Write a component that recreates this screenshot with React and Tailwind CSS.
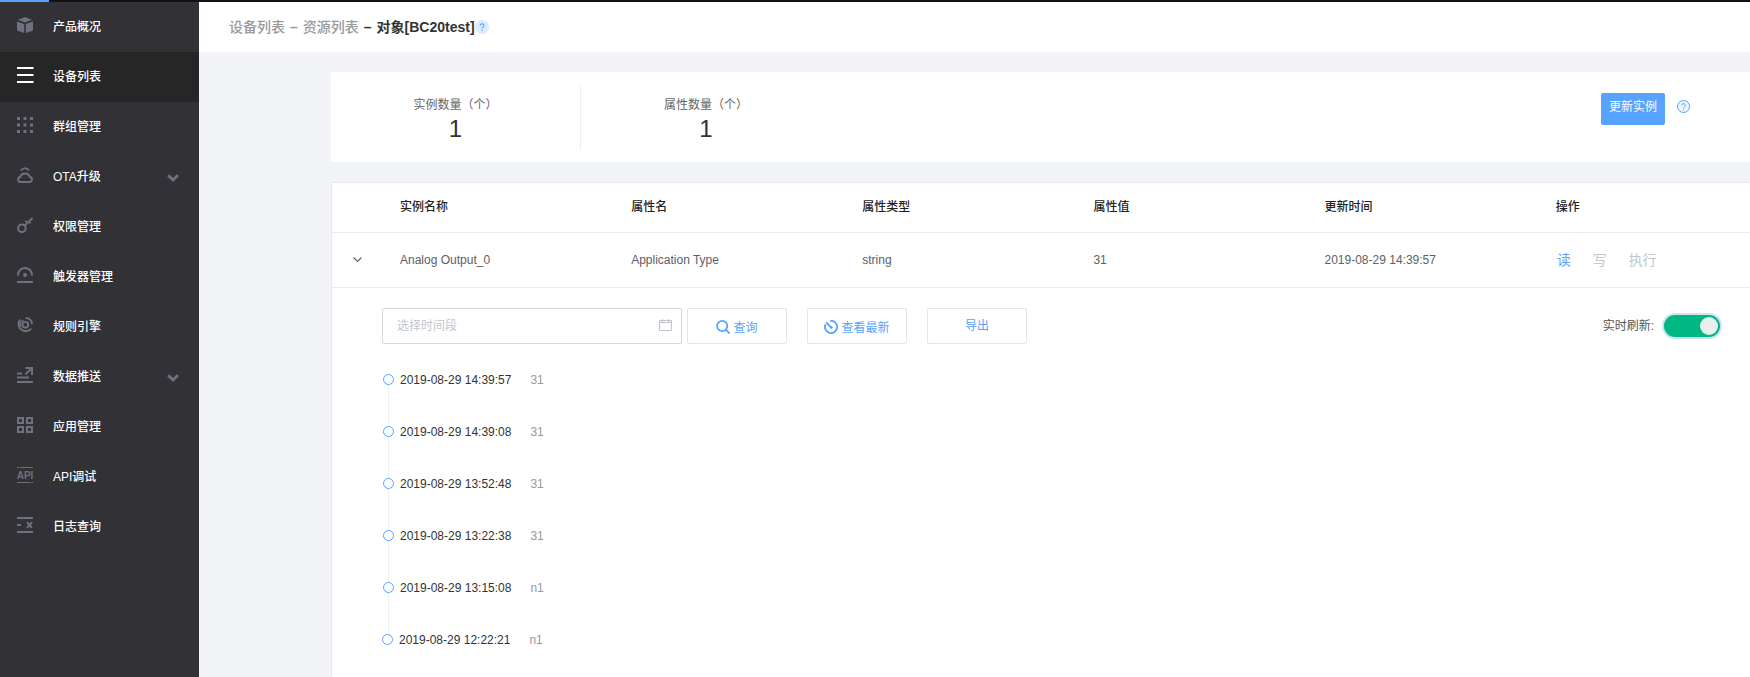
import React, { useState } from 'react';

const menu = [
  { name: '产品概况', icon: 'cube' },
  { name: '设备列表', icon: 'list', active: true },
  { name: '群组管理', icon: 'dots' },
  { name: 'OTA升级', icon: 'cloud', children: true },
  { name: '权限管理', icon: 'key' },
  { name: '触发器管理', icon: 'trigger' },
  { name: '规则引擎', icon: 'engine' },
  { name: '数据推送', icon: 'push', children: true },
  { name: '应用管理', icon: 'apps' },
  { name: 'API调试', icon: 'api' },
  { name: '日志查询', icon: 'log' },
];

const stats = [
  { label: '实例数量（个）', value: 1 },
  { label: '属性数量（个）', value: 1 },
];

const columns = ['实例名称', '属性名', '属性类型', '属性值', '更新时间'];

const row = ['Analog Output_0', 'Application Type', 'string', '31', '2019-08-29 14:39:57'];

const history = [
  { time: '2019-08-29 14:39:57', value: '31' },
  { time: '2019-08-29 14:39:08', value: '31' },
  { time: '2019-08-29 13:52:48', value: '31' },
  { time: '2019-08-29 13:22:38', value: '31' },
  { time: '2019-08-29 13:15:08', value: 'n1' },
  { time: '2019-08-29 12:22:21', value: 'n1' },
];

const icons = {
  cube: (
    <g fill="currentColor">
      <path d="M8 0 15 2.7 8 5.4 1 2.7z" />
      <path d="M0 4.4 7.2 7v9L1.2 14Q0 13.6 0 12.4z" />
      <path d="M16 4.4 8.8 7v9l6-2Q16 13.6 16 12.4z" />
    </g>
  ),
  list: <path d="M0 1h16.5M0 8h16.5M0 15h16.5" stroke="currentColor" strokeWidth="2" />,
  dots: (
    <g fill="currentColor">
      {[0, 6.5, 13].map((y) =>
        [0, 6.5, 13].map((x) => <rect key={`${x}-${y}`} x={x} y={y} width="3" height="3" />)
      )}
    </g>
  ),
  cloud: (
    <g fill="none" stroke="currentColor" strokeWidth="1.9">
      <path d="M4 15h8.2a2.5 2.5 0 0 0 .5-5 4.9 4.9 0 0 0-9.4 0A2.5 2.5 0 0 0 4 15z" />
      <path d="M4 3.4Q8-1.2 12 3.4" />
    </g>
  ),
  key: (
    <g fill="none" stroke="currentColor" strokeWidth="2">
      <circle cx="4.9" cy="11.3" r="3.8" />
      <path d="M7.6 8.6 15.6 1" />
      <path d="m8.2 3.8 2.4 2M11.8 4.6l2 1.8" strokeWidth="1.8" />
    </g>
  ),
  trigger: (
    <g fill="none" stroke="currentColor" strokeWidth="2">
      <path d="M1 8.6V8a7 7 0 0 1 14 0v.6M0 15h16" />
      <circle cx="8" cy="8" r="2" fill="currentColor" stroke="none" />
    </g>
  ),
  engine: (
    <g fill="none" stroke="currentColor" strokeWidth="1.9">
      <circle cx="8.3" cy="7.8" r="2.9" />
      <path d="M3.2 2.6A7.1 7.1 0 1 0 14.2 11.6" />
      <path d="M8.6.9A7.2 7.2 0 0 1 15.2 7" />
      <path d="M3.6 9.4A5 5 0 0 1 6.6 3" strokeWidth="1.2" />
    </g>
  ),
  push: (
    <g fill="none" stroke="currentColor" strokeWidth="2">
      <path d="M0 6.6h5M0 10.6h12M0 15h16" />
      <path d="M8.4 7.4 14.8 1.2M8.4 1H15v7" />
    </g>
  ),
  apps: (
    <g fill="none" stroke="currentColor" strokeWidth="2">
      <path d="M1 1h5v5H1zM10 1h5v5h-5zM1 10h5v5H1zM10 10h5v5h-5z" />
    </g>
  ),
  api: (
    <g>
      <path d="M0 .5h2M3 .5h13M0 15.5h13M14 15.5h2" stroke="currentColor" />
      <text x="8" y="12" textAnchor="middle" fontSize="10" fontWeight="700" fill="currentColor">
        API
      </text>
    </g>
  ),
  log: (
    <g fill="none" stroke="currentColor" strokeWidth="2">
      <path d="M0 1h16M0 8h4M0 15h16" />
      <path d="m10 5.2 5 5.6M15 5.2l-5 5.6" />
    </g>
  ),
};

const MenuIcon = ({ name }) => (
  <svg viewBox="0 0 16 16" className="mb-1 size-4 overflow-visible" aria-hidden="true">
    {icons[name]}
  </svg>
);

const QuestionMark = () => (
  <path
    d="M4.7 5.4a1.8 1.8 0 1 1 2.6 1.6q-.8.4-.8 1.2M6.5 9v1.1"
    fill="none"
    stroke="currentColor"
  />
);

const Sidebar = () => (
  <nav className="w-[199px] shrink-0 bg-[#323136]">
    {menu.map((item) => (
      <a
        key={item.name}
        href="#"
        className={
          item.active
            ? 'flex h-[50px] items-center bg-[#262626] pl-[17px] pr-5 text-white'
            : 'flex h-[50px] items-center pl-[17px] pr-5 text-[#6c727f]'
        }
      >
        <MenuIcon name={item.icon} />
        <span className="ml-5 flex-1 font-medium text-white">{item.name}</span>
        {item.children && (
          <svg viewBox="0 0 12 8" className="mt-0.5 h-2 w-3" aria-hidden="true">
            <path d="m1.2 1.2 4.8 4.8 4.8-4.8" fill="none" stroke="currentColor" strokeWidth="2.8" />
          </svg>
        )}
      </a>
    ))}
  </nav>
);

const Header = () => (
  <header className="flex h-[50px] shrink-0 items-center bg-white pl-[30px] text-sm font-medium text-[#999]">
    <a href="#">设备列表</a>
    <span className="mx-[5px] font-bold">–</span>
    <a href="#">资源列表</a>
    <span className="mx-[5px] font-bold text-[#333]">–</span>
    <h1 className="font-bold text-[#333]">对象[BC20test]</h1>
    <button type="button" aria-label="帮助" className="text-[#57a3ff]">
      <svg viewBox="0 0 13 13" className="size-[14px]">
        <circle cx="6.5" cy="6.5" r="6.5" fill="#dcebff" />
        <QuestionMark />
      </svg>
    </button>
  </header>
);

const Stats = () => (
  <section className="flex h-[90px] shrink-0 items-start bg-white">
    {stats.map((stat, i) => (
      <dl
        key={stat.label}
        className={
          i === 0
            ? 'mt-[13px] h-16 w-[250px] border-r border-[#eee] pt-[10px] text-center'
            : 'mt-[13px] h-16 w-[250px] pt-[10px] text-center'
        }
      >
        <dt className="leading-5 text-[#666]">{stat.label}</dt>
        <dd className="text-2xl leading-7 text-[#333]">{stat.value}</dd>
      </dl>
    ))}
    <div className="ml-auto mr-[60px] mt-[21px] flex">
      <button type="button" className="flex h-8 w-16 justify-center rounded-xs bg-[#57a3ff] pt-1 leading-5 text-white">
        更新实例
      </button>
      <button type="button" aria-label="更新说明" className="ml-3 h-[27px] text-[#57a3ff]">
        <svg viewBox="0 0 13 13" className="size-[13px]">
          <circle cx="6.5" cy="6.5" r="6" fill="#eef5ff" stroke="currentColor" />
          <QuestionMark />
        </svg>
      </button>
    </div>
  </section>
);

const actionButton =
  'flex h-9 w-[100px] items-center justify-center rounded-xs border border-[#e4e6ec] text-[#57a3ff]';

const Toolbar = () => {
  const [live, setLive] = useState(true);

  return (
    <div className="flex items-center">
      <div className="flex h-9 w-[300px] items-center rounded-xs border border-[#d7d8da] pl-[14px] pr-[9px]">
        <input
          type="text"
          aria-label="选择时间段"
          placeholder="选择时间段"
          className="min-w-0 flex-1 outline-none placeholder:text-[#c3c6cd]"
        />
        <svg viewBox="0 0 13 12" className="mb-0.5 h-3 w-[13px]" fill="none" stroke="#c0c3ca" aria-hidden="true">
          <path d="M.5 1.5h12v10H.5zM.5 3.5h12M3.5 0v3M9.5 0v3" />
        </svg>
      </div>
      <button type="button" className={`${actionButton} ml-[5px] gap-[3px] pt-1`}>
        <svg viewBox="0 0 14 14" className="mb-0.5 size-[14px]" fill="none" stroke="currentColor" strokeWidth="1.8">
          <circle cx="6.2" cy="6" r="5.1" />
          <path d="m9.8 9.6 3.8 3.9" />
        </svg>
        查询
      </button>
      <button type="button" className={`${actionButton} ml-5 gap-[3px] pt-1`}>
        <svg viewBox="0 0 14 14" className="mb-0.5 size-[14px]" fill="none" stroke="currentColor" strokeWidth="1.8">
          <path d="M6.2.9A6.1 6.1 0 1 1 1.6 4.2" />
          <path d="M2.2 2.4 7 7.4" />
          <circle cx="7.2" cy="7.4" r="1.4" fill="currentColor" stroke="none" />
        </svg>
        查看最新
      </button>
      <button type="button" className={`${actionButton} ml-5`}>
        导出
      </button>
      <label className="ml-auto flex items-center gap-[10px] text-[#555]">
        实时刷新:
        <span className="flex h-[22px] w-14 items-center justify-end rounded-full bg-[#00b881] px-0.5 ring-2 ring-[#cfe2f7] has-[:not(:checked)]:justify-start has-[:not(:checked)]:bg-gray-300">
          <input
            type="checkbox"
            role="switch"
            className="size-[18px] appearance-none rounded-full bg-[#e9eeee]"
            checked={live}
            onChange={() => setLive(!live)}
          />
        </span>
      </label>
    </div>
  );
};

const Timeline = () => (
  <ul className="ml-[6px] mt-[30px]">
    {history.map((item) => (
      <li
        key={item.time}
        className="relative flex h-[52px] border-l border-dotted border-[#dfe1e6] pl-[11px] leading-3 last:h-3 last:border-l-0"
      >
        <span className="absolute -left-[6px] top-0 size-[11px] rounded-full border border-[#57a3ff] bg-white" />
        <time className="text-[#333]">{item.time}</time>
        <span className="ml-[19px] text-[#999]">{item.value}</span>
      </li>
    ))}
  </ul>
);

const InstanceTable = () => (
  <section className="flex-1 border-l border-t border-[#e9eaec] bg-white">
    <table className="w-full table-fixed border-collapse text-left">
      <thead>
        <tr className="h-[49px] border-b border-[#e9eaec] text-[#222]">
          <th className="w-[50px]" />
          {columns.map((column) => (
            <th key={column} className="w-[16.3%] pl-[18px] font-medium">
              {column}
            </th>
          ))}
          <th className="pl-[18px] font-medium">操作</th>
        </tr>
      </thead>
      <tbody>
        <tr className="h-[55px] border-b border-[#e9eaec] text-[#5d6068]">
          <td className="pl-5">
            <button type="button" aria-label="收起" className="block">
              <svg viewBox="0 0 11 8" className="h-2 w-[11px]" fill="none" stroke="#666" strokeWidth="1.2">
                <path d="m1.5 1.5 4 4 4-4" />
              </svg>
            </button>
          </td>
          {row.map((cell, i) => (
            <td key={columns[i]} className="pl-[18px]">
              {cell}
            </td>
          ))}
          <td className="pl-[19px] text-sm text-[#c3c6cd]">
            <div className="flex gap-[22px]">
              <button type="button" className="text-[#57a3ff]">
                读
              </button>
              <button type="button" disabled>
                写
              </button>
              <button type="button" disabled>
                执行
              </button>
            </div>
          </td>
        </tr>
        <tr>
          <td colSpan={7} className="pl-[50px] pr-[30px] pt-5">
            <Toolbar />
            <Timeline />
          </td>
        </tr>
      </tbody>
    </table>
  </section>
);

const App = () => (
  <div className="flex min-h-screen flex-col bg-[#f3f4f7] font-['Liberation_Sans','Noto_Sans_CJK_SC',sans-serif] text-xs">
    <div className="h-0.5 shrink-0 bg-[#111]">
      <div className="h-0.5 w-[49px] bg-[#57a3ff]" />
    </div>
    <div className="flex flex-1">
      <Sidebar />
      <div className="flex min-w-0 flex-1 flex-col">
        <Header />
        <main className="flex flex-1 flex-col gap-5 pl-[132px] pt-5">
          <Stats />
          <InstanceTable />
        </main>
      </div>
    </div>
  </div>
);

export default App;
